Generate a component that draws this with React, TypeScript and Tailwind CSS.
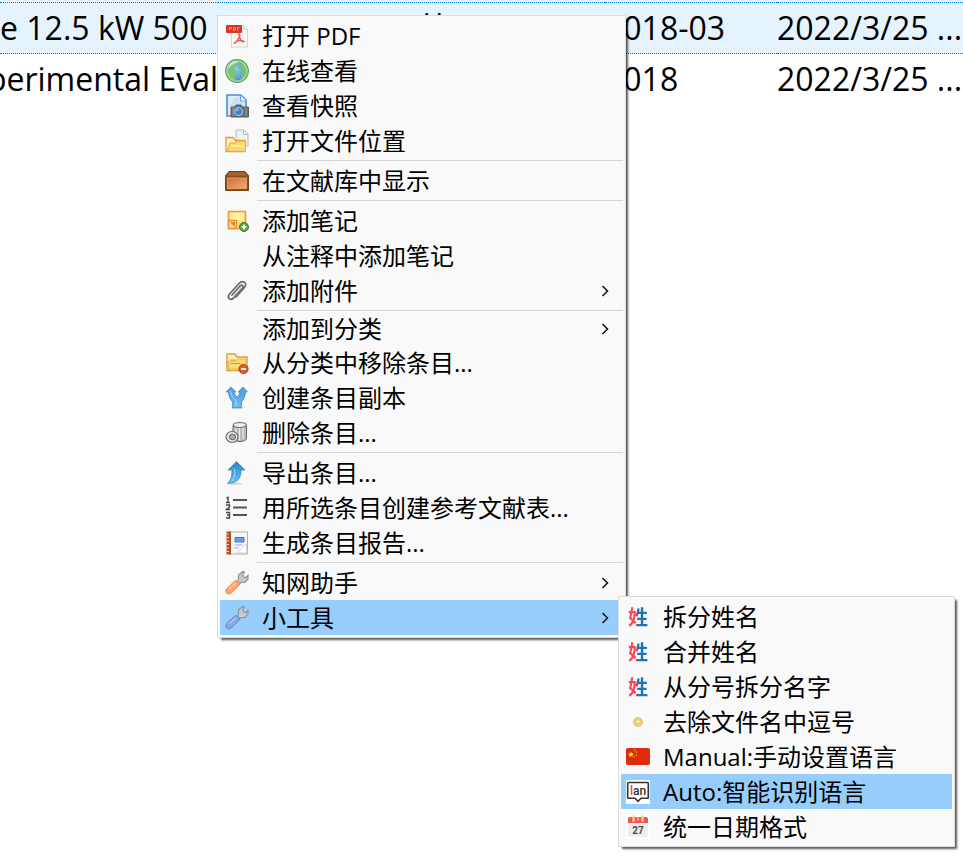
import type { ReactNode } from "react";

function Svg({ children }: { children: ReactNode }) {
  return (
    <svg viewBox="0 0 24 24" className="size-6 shrink-0" aria-hidden="true" fill="none">
      {children}
    </svg>
  );
}

const PdfIcon = () => (
  <Svg>
    <path d="M6.500 1.500H19L22.500 5v18h-16z" fill="#f7f7f7" stroke="#d6d6d6" />
    <path d="M19 1.500V5h3.500" fill="#fff" stroke="#c8c8c8" />
    <rect x="1" y="1" width="16" height="8" rx="1" fill="#e0311f" />
    <path d="M4.500 6.500v-3h2v1.500h-2M8.500 3.500v3h1.500q1-1.500 0-3zM12.500 6.500v-3h2M12.500 5h1.500" stroke="#f6a79d" strokeWidth=".8" />
    <path d="M14 10c2 1 0 5-4 9-1.500 1 1-2.500 5-2.500 3 0 5 1 3.500 1.500C16 18 14 13 14 10z" stroke="#ec5a50" strokeWidth="1.500" />
  </Svg>
);

const GlobeIcon = () => (
  <Svg>
    <defs>
      <radialGradient id="globe-sea" cx=".45" cy=".45" r=".6">
        <stop offset="0" stopColor="#8ed0f5" />
        <stop offset="1" stopColor="#3a86c0" />
      </radialGradient>
    </defs>
    <circle cx="12" cy="12" r="11.300" fill="url(#globe-sea)" stroke="#5aa356" strokeWidth="1.200" />
    <path d="M2 9C3 4 8 1 13 2l2 2-3 3-4 1 2 3 3 1-1 3-2 1 1 6C4 21 0 15 2 9z" fill="#7fc27a" />
    <path d="M17 3c4 2 5 6 5 9 0 4-2 7-5 8.500l-1-4 2-3-2-3-2-2 2-2z" fill="#79bf72" />
    <circle cx="12" cy="12" r="10" stroke="#a8d9a0" strokeWidth="1.600" opacity=".9" />
    <path d="M4 8q3-5 8-5" stroke="#dff5d6" strokeWidth="1.800" opacity=".8" />
  </Svg>
);

const SnapshotIcon = () => (
  <Svg>
    <path d="M2 1h14l5 5v16H2z" fill="#dcecfb" stroke="#4e8ccc" strokeWidth="1.600" />
    <path d="M15.500 1v6H21" fill="#f5faff" stroke="#6fa4da" strokeWidth="1.200" />
    <path d="M3.500 13q5-5 6-10h5v5h5v5z" fill="#c8e1f8" />
    <path d="M6 13h4l1-2h5l1 2h6.500v10H6z" fill="#6b7076" stroke="#555a60" />
    <path d="M8 13v9M21 13v9" stroke="#92989e" />
    <circle cx="13.500" cy="17.500" r="4" fill="#3b83d4" stroke="#a9c1da" strokeWidth="1.200" />
    <path d="M11.500 17a2.500 2.500 0 0 1 2-2" stroke="#c0e0fc" strokeWidth="1.200" />
  </Svg>
);

const FolderPageIcon = () => (
  <Svg>
    <path d="M11 1h8l4 4v12H11z" fill="#f1f1f1" stroke="#bcbcbc" />
    <path d="M18.500 1.500V5.500h4" fill="#fff" stroke="#bbb" />
    <path d="M1 22.500v-14h7l2 3h10v11z" fill="#ffeebb" stroke="#dfa033" strokeWidth="1.300" />
    <path d="M5 14h5l2-2h8.500v10.500H2z" fill="#fbd86d" stroke="#e2aa40" />
    <path d="M6 17h13" stroke="#ffe99a" strokeWidth="2" />
  </Svg>
);

const LibraryIcon = () => (
  <Svg>
    <defs>
      <linearGradient id="crate" x1="0" y1="0" x2="1" y2="1">
        <stop offset="0" stopColor="#cf7038" />
        <stop offset="1" stopColor="#efaa74" />
      </linearGradient>
    </defs>
    <path d="M4 2.500h16l3.500 4V21.500H.500V6.500z" fill="#87501e" stroke="#744316" />
    <path d="M4.500 3.500h15l2.500 3H2z" fill="#a66a2c" />
    <rect x="2.500" y="9" width="19" height="10.500" fill="url(#crate)" stroke="#e59a68" />
  </Svg>
);

const NoteAddIcon = () => (
  <Svg>
    <path d="M3.500 2.500h17v17h-17z" fill="#fbe37d" stroke="#ef9a34" strokeWidth="1.600" />
    <path d="M5 4h14v7q-8 0-14 3z" fill="#fff1a5" />
    <path d="M3.500 11.500h8v8h-8z" fill="#fbd5a5" stroke="#ed9135" strokeWidth="1.400" />
    <path d="m5 13 5 5v-5z" fill="#e57e24" />
    <circle cx="19" cy="18" r="4.500" fill="#5b9f46" stroke="#3f7e31" />
    <path d="M19 15.500v5M16.500 18h5" stroke="#fff" strokeWidth="1.700" />
  </Svg>
);

const ClipIcon = () => (
  <Svg>
    <path d="m7 16 8-9c2-2 4 0 2.500 2L8.500 19c-3 3-7 0-4-4L14 4.500c3.500-4 9-.500 5.500 4L11 18" stroke="#6e6e6e" strokeWidth="1.800" strokeLinecap="round" />
    <path d="m8 17 8-9" stroke="#c3c3c3" strokeWidth=".8" />
  </Svg>
);

const FolderRemoveIcon = () => (
  <Svg>
    <path d="M2 19.500V3h8l2 3h10v13.500z" fill="#fff0b8" stroke="#dea037" strokeWidth="1.400" />
    <path d="M3.500 18v-8h7l2-2h8.500v10z" fill="#fbdb78" stroke="#e9b64c" />
    <path d="M5.500 12.500h10M5.500 9h5" stroke="#d99a30" />
    <circle cx="18.500" cy="18" r="4.600" fill="#d55f2c" stroke="#b3481c" />
    <path d="M16 18h5" stroke="#fff" strokeWidth="1.900" />
  </Svg>
);

const ForkIcon = () => (
  <Svg>
    <defs>
      <linearGradient id="fork" x1="0" y1="0" x2="0" y2="1">
        <stop offset="0" stopColor="#4a9cdc" />
        <stop offset="1" stopColor="#6dbdf2" />
      </linearGradient>
    </defs>
    <ellipse cx="12" cy="22" rx="6" ry="1.300" fill="#ccc" />
    <path d="M6 1 11 6H9Q9.500 9.500 12 11 14.500 9.500 15 6H13l5-5 4.500 5H20.500q0 6-4 10v5.500h-9V16Q3.500 12 3.500 6H1z" fill="url(#fork)" stroke="#3f8ecb" strokeWidth=".8" />
    <path d="M5.500 5q1 7 5.500 10v5" stroke="#a6ddfb" />
  </Svg>
);

const TrashIcon = () => (
  <Svg>
    <path d="M8 4.500v13c1 4 13 4 13.500 0v-13z" fill="#b8b8b8" stroke="#676767" />
    <path d="M11 7v11M14.500 7v12M18 7v11" stroke="#ececec" strokeWidth="1.200" />
    <ellipse cx="14.800" cy="4" rx="6.500" ry="2.500" fill="#eee" stroke="#6c6c6c" strokeWidth="1.200" />
    <ellipse cx="7" cy="16" rx="6" ry="5.500" fill="#e1e1e1" stroke="#6d6d6d" strokeWidth="1.200" />
    <ellipse cx="7.500" cy="16" rx="3" ry="2.800" fill="#aaa" stroke="#666" />
  </Svg>
);

const ExportIcon = () => (
  <Svg>
    <defs>
      <linearGradient id="export" x1="0" y1="0" x2="0" y2="1">
        <stop offset="0" stopColor="#2c82c4" />
        <stop offset="1" stopColor="#68c3f3" />
      </linearGradient>
    </defs>
    <ellipse cx="10" cy="22.700" rx="7" ry="1" fill="#d5d5d5" />
    <path d="M11.500.500 20 9h-4c0 7-2 13-13.500 13.500C6 19 7 16 7 9H3z" fill="url(#export)" stroke="#3689c2" strokeWidth=".8" />
    <path d="M9.500 8c1 6-.500 9-2.500 12" stroke="#a2dcfa" />
  </Svg>
);

const NumberedListIcon = () => (
  <Svg>
    <path d="M8 4h14M8 11.500h14M8 19h14" stroke="#555" strokeWidth="1.800" />
    <path d="M1.500 2 3 1.300v5M1 6.500h4M1 9h3.500v2L1.500 13.500H5M1 16.500h3.500v5.500H1M2 19h2.500" stroke="#484848" strokeWidth="1.400" />
  </Svg>
);

const ReportIcon = () => (
  <Svg>
    <path d="M4 1h18.500v22H4z" fill="#f7f7f8" stroke="#aeb2b8" />
    <path d="M1.500.500H6v23H1.500z" fill="#b4501d" />
    <path d="M.500 3H4M.500 6.500H4M.500 10H4M.500 13.500H4M.500 17H4M.500 20.500H4" stroke="#f5d0b4" strokeWidth="1.200" />
    <path d="M10 6.500h9v4.500h-9z" fill="#6d9be4" stroke="#427ad0" />
    <path d="M9.500 14h8M9.500 17h4" stroke="#98afce" strokeWidth="1.200" />
    <path d="m13 21 8-8 1 9H13z" fill="#fff" stroke="#c6c9cd" strokeWidth=".8" />
  </Svg>
);

function WrenchIcon({ handle, edge }: { handle: string; edge: string }) {
  return (
    <Svg>
      <path d="M12.500 11 13.500 8V4l4-3.300 2 .3-1.800 2.500.8 2.500 2.500.500 2-2V8l-3 3.500h-4L14.500 13z" fill="#c7cacd" stroke="#8f9499" strokeWidth="1.200" />
      <path d="m1.800 17.500 8.200-7.700q4.500-.500 4.500 4L7 21.500q-4 3-6 0-1-2 .800-4z" fill={handle} stroke={edge} />
      <path d="m4 18 7-6" stroke="#fff" strokeWidth="1.600" opacity=".35" />
    </Svg>
  );
}

const SurnameIcon = () => (
  <span
    aria-hidden="true"
    className="flex size-6 shrink-0 items-center justify-center bg-linear-to-r from-[#f4485e] from-46% to-[#1c75bc] to-46% bg-clip-text font-['Noto_Sans_CJK_SC',sans-serif] text-xl font-bold text-transparent"
  >
    姓
  </span>
);

const DotIcon = () => (
  <Svg>
    <circle cx="12" cy="12" r="4.500" fill="#ecd07a" stroke="#dcc583" />
    <circle cx="12" cy="11.700" r="2.300" fill="#fbeaa5" stroke="#dfb850" strokeWidth=".6" />
  </Svg>
);

const FlagIcon = () => (
  <Svg>
    <rect y="3" width="24" height="17" rx="2" fill="#df2a10" />
    <path d="m5 6.500.8 2 2.200.1-1.700 1.400.6 2.100L5 10.900l-1.900 1.200.6-2.100L2 8.600l2.200-.1z" fill="#ffdf20" />
    <g fill="#f9b517">
      <circle cx="8.500" cy="5" r=".7" />
      <circle cx="10.300" cy="7" r=".7" />
      <circle cx="10.300" cy="10" r=".7" />
      <circle cx="8.500" cy="12" r=".7" />
    </g>
  </Svg>
);

const LanguageIcon = () => (
  <Svg>
    <rect width="24" height="24" fill="#fff" />
    <path d="M2.500 2.500h19a.8.8 0 0 1 .8.800V17.500a.8.8 0 0 1-.8.800h-6.500l-3 3-3-3H2.500a.8.8 0 0 1-.8-.8V3.300a.8.8 0 0 1 .8-.8z" stroke="#333" strokeWidth="1.600" />
    <text x="4" y="14.500" fontFamily="Roboto, sans-serif" fontSize="12" fontWeight="500" fill="#333">
      <tspan fill="#ee4350">l</tspan>an
    </text>
  </Svg>
);

const CalendarIcon = () => (
  <Svg>
    <rect width="24" height="24" fill="#fff" />
    <path d="M2 8h20v12a2 2 0 0 1-2 2H4a2 2 0 0 1-2-2z" fill="#eeeeec" />
    <path d="M4 2h16a2 2 0 0 1 2 2v4H2V4a2 2 0 0 1 2-2z" fill="#f2555c" />
    <path d="M7.500 1v5M16.500 1v5" stroke="#ffdb6e" strokeWidth="2.200" strokeLinecap="round" />
    <path d="M12 3v2" stroke="#ffb09a" strokeWidth="1.500" strokeLinecap="round" />
    <text x="12" y="18.500" textAnchor="middle" fontFamily="Roboto, sans-serif" fontSize="10" fontWeight="700" fill="#5a4545">27</text>
  </Svg>
);

type Item = {
  label: string;
  icon?: ReactNode;
  submenu?: boolean;
  active?: boolean;
  compact?: boolean;
};

const groups: Item[][] = [
  [
    { label: "打开 PDF", icon: <PdfIcon /> },
    { label: "在线查看", icon: <GlobeIcon /> },
    { label: "查看快照", icon: <SnapshotIcon /> },
    { label: "打开文件位置", icon: <FolderPageIcon /> },
  ],
  [{ label: "在文献库中显示", icon: <LibraryIcon /> }],
  [
    { label: "添加笔记", icon: <NoteAddIcon /> },
    { label: "从注释中添加笔记" },
    { label: "添加附件", icon: <ClipIcon />, submenu: true },
  ],
  [
    { label: "添加到分类", submenu: true, compact: true },
    { label: "从分类中移除条目...", icon: <FolderRemoveIcon /> },
    { label: "创建条目副本", icon: <ForkIcon /> },
    { label: "删除条目...", icon: <TrashIcon /> },
  ],
  [
    { label: "导出条目...", icon: <ExportIcon /> },
    { label: "用所选条目创建参考文献表...", icon: <NumberedListIcon /> },
    { label: "生成条目报告...", icon: <ReportIcon /> },
  ],
  [
    { label: "知网助手", icon: <WrenchIcon handle="#fba56c" edge="#ee8c52" />, submenu: true },
    { label: "小工具", icon: <WrenchIcon handle="#86a9e4" edge="#678ccd" />, submenu: true, active: true },
  ],
];

const tools: Item[] = [
  { label: "拆分姓名", icon: <SurnameIcon /> },
  { label: "合并姓名", icon: <SurnameIcon /> },
  { label: "从分号拆分名字", icon: <SurnameIcon /> },
  { label: "去除文件名中逗号", icon: <DotIcon /> },
  { label: "Manual:手动设置语言", icon: <FlagIcon /> },
  { label: "Auto:智能识别语言", icon: <LanguageIcon />, active: true },
  { label: "统一日期格式", icon: <CalendarIcon /> },
];

function MenuItem({ item }: { item: Item }) {
  return (
    <button
      type="button"
      role="menuitem"
      aria-haspopup={item.submenu ? "menu" : undefined}
      className={`flex w-full items-center gap-[13px] pr-3 pl-[5px] text-left ${item.compact ? "h-8" : "h-[35px]"} ${
        item.active ? "bg-[#96cdfb]" : ""
      }`}
    >
      {item.icon ?? <span className="size-6 shrink-0" />}
      <span className="grow whitespace-nowrap">{item.label}</span>
      {item.submenu && (
        <svg viewBox="0 0 12 12" className="size-3 shrink-0" aria-hidden="true" fill="none">
          <path d="m3.500 1 5 5-5 5" stroke="#111" strokeWidth="1.500" />
        </svg>
      )}
    </button>
  );
}

const menuClass =
  "absolute border border-[#dcdcdc] bg-[#f9f9f9] p-0.5 text-2xl leading-8 shadow-[3px_3px_2px_-1px_rgba(0,0,0,0.65)]";

const rows = [
  { title: "e 12.5 kW 500", creator: "等", year: "2018-03", added: "2022/3/25 ...", selected: true },
  { title: "perimental Eval", creator: "", year: "2018", added: "2022/3/25 ...", selected: false },
];

export default function App() {
  return (
    <div className="relative min-h-screen overflow-hidden bg-white font-['Open_Sans','Noto_Sans_CJK_SC',sans-serif] text-black">
      <div className="h-0.5 bg-[#e5f3ff]" />
      <table className="w-full table-fixed border-collapse text-[32px] leading-[50px]">
        <colgroup>
          <col className="w-[218px]" />
          <col className="w-[387px]" />
          <col className="w-[172px]" />
          <col />
        </colgroup>
        <tbody>
          {rows.map((row) => (
            <tr
              key={row.title}
              className={row.selected ? "border-y border-dotted border-[#0078d7] bg-[#e5f3ff]" : ""}
            >
              <td className="p-0">
                <div className={`flex whitespace-nowrap ${row.selected ? "" : "justify-end"}`}>{row.title}</div>
              </td>
              <td className="p-0 pl-[202px]">{row.creator}</td>
              <td className="p-0">{row.year}</td>
              <td className="p-0 whitespace-nowrap">{row.added}</td>
            </tr>
          ))}
        </tbody>
      </table>

      <div role="menu" className={`${menuClass} top-[15px] left-[217px] w-[409px]`}>
        {groups.map((group, index) => (
          <div key={index}>
            {index > 0 && <hr className="my-0.5 ml-[37px] border-[#d7d7d7]" />}
            {group.map((item) => (
              <MenuItem key={item.label} item={item} />
            ))}
          </div>
        ))}
      </div>

      <div role="menu" className={`${menuClass} top-[596px] left-[618px] w-[337px]`}>
        {tools.map((item) => (
          <MenuItem key={item.label} item={item} />
        ))}
      </div>
    </div>
  );
}
